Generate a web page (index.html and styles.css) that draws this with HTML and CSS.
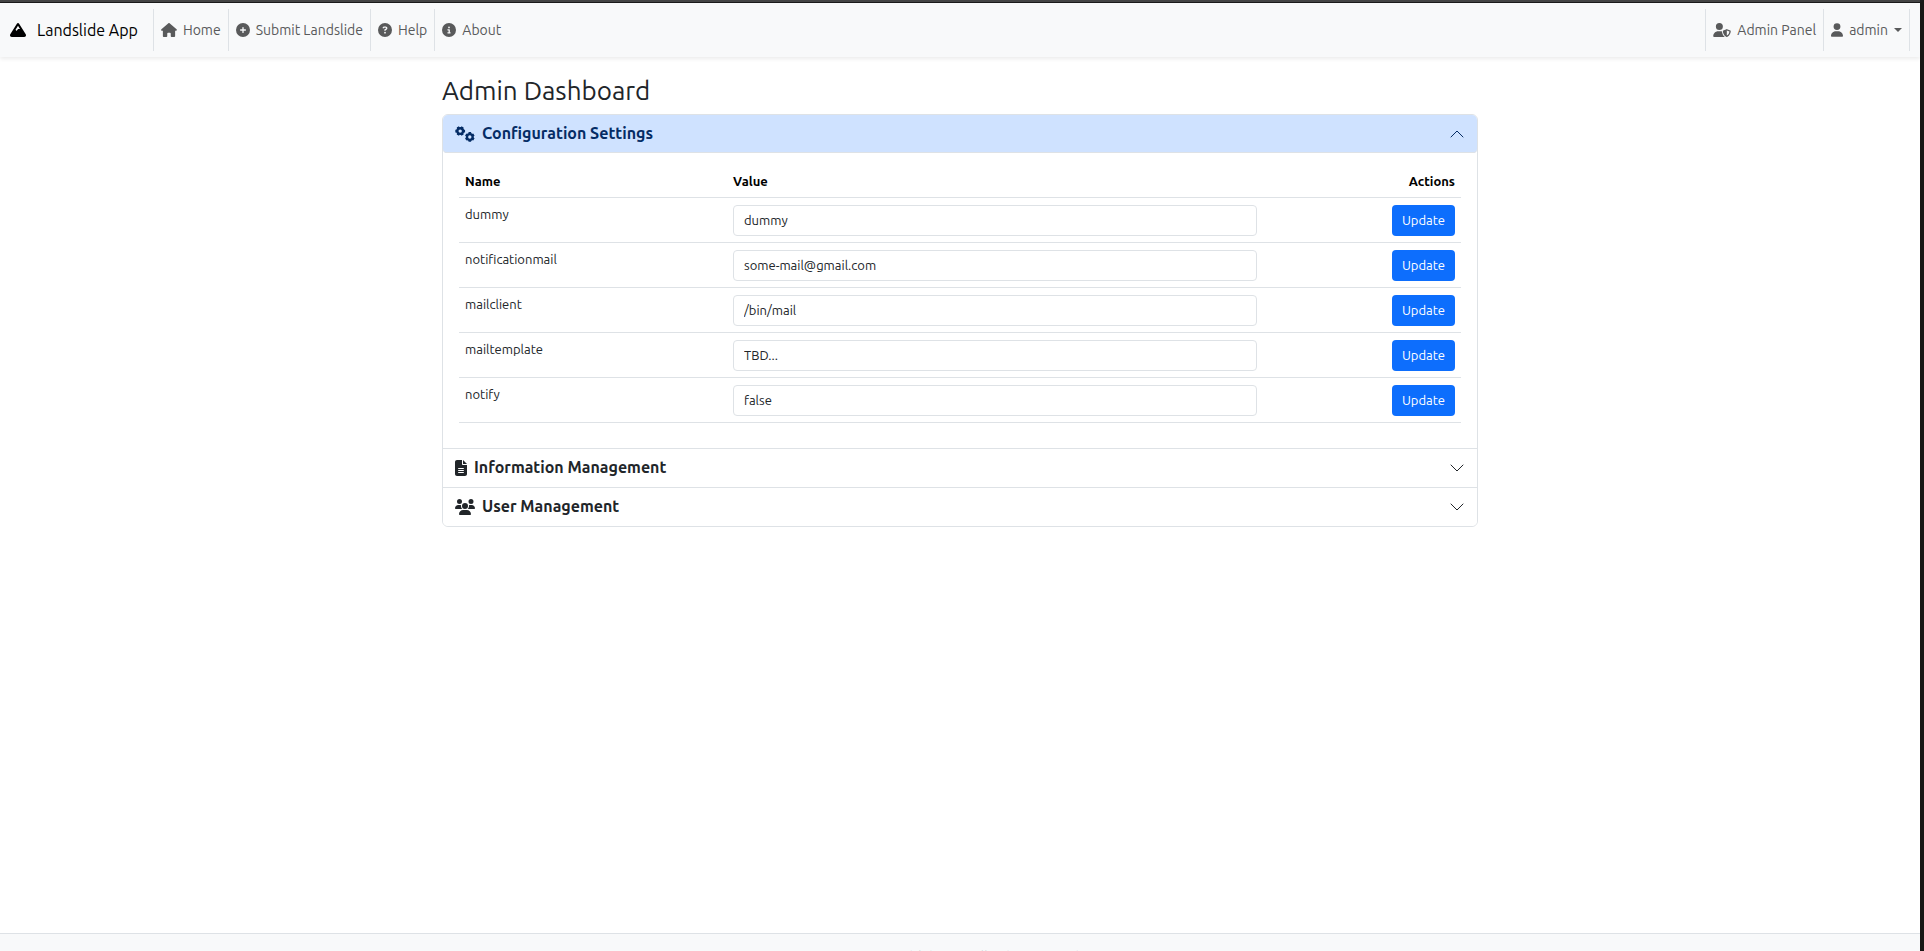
FILE: index.html
```html
<!DOCTYPE html>
<html lang="en">
<head>
<meta charset="utf-8">
<title>Landslide App</title>
<link rel="stylesheet" href="styles.css">
</head>
<body>
<header class="navbar">
  <a class="brand" href="#">
    <svg class="icon icon-brand" viewBox="0 0 512 512"><path d="M256 32c12.5 0 24.1 6.4 30.7 17L503.4 394.4c5.6 8.9 8.6 19.2 8.6 29.7c0 30.9-25 55.9-55.9 55.9H55.9C25 480 0 455 0 424.1c0-10.5 3-20.8 8.6-29.7L225.2 49c6.6-10.6 18.3-17 30.8-17zm65 192L256 120.4 176.9 246.5l18.3 24.4c6.4 8.5 19.2 8.5 25.6 0l25.6-34.1c6-8.1 15.5-12.8 25.6-12.8h49z"/></svg>
    <span>Landslide App</span>
  </a>
  <nav class="nav nav-main">
    <a class="nav-link" href="#"><svg class="icon icon-home" viewBox="0 0 576 512"><path d="M575.8 255.5c0 18-15 32.1-32 32.1h-32l.7 160.2c0 2.7-.2 5.4-.5 8.1V472c0 22.1-17.9 40-40 40H456c-1.1 0-2.2 0-3.3-.1c-1.4 .1-2.8 .1-4.2 .1H416 392c-22.1 0-40-17.9-40-40V448 384c0-17.7-14.3-32-32-32H256c-17.7 0-32 14.3-32 32v64 24c0 22.1-17.9 40-40 40H160 128.1c-1.5 0-3-.1-4.5-.2c-1.2 .1-2.4 .2-3.6 .2H104c-22.1 0-40-17.9-40-40V360c0-.9 0-1.9 .1-2.8V287.6H32c-18 0-32-14-32-32.1c0-9 3-17 10-24L266.4 8c7-7 15-8 22-8s15 2 21 7L564.8 231.5c8 7 12 15 11 24z"/></svg>Home</a>
    <a class="nav-link" href="#"><svg class="icon" viewBox="0 0 512 512"><path d="M256 512A256 256 0 1 0 256 0a256 256 0 1 0 0 512zM232 344V280H168c-13.3 0-24-10.7-24-24s10.7-24 24-24h64V168c0-13.3 10.7-24 24-24s24 10.7 24 24v64h64c13.3 0 24 10.7 24 24s-10.7 24-24 24H280v64c0 13.3-10.7 24-24 24s-24-10.7-24-24z"/></svg>Submit Landslide</a>
    <a class="nav-link" href="#"><svg class="icon" viewBox="0 0 512 512"><path d="M256 512A256 256 0 1 0 256 0a256 256 0 1 0 0 512zM169.8 165.3c7.9-22.3 29.1-37.3 52.8-37.3h58.3c34.9 0 63.1 28.3 63.1 63.1c0 22.6-12.1 43.5-31.7 54.8L280 264.4c-.2 13-10.9 23.6-24 23.6c-13.3 0-24-10.7-24-24V250.5c0-8.6 4.6-16.5 12.1-20.8l44.3-25.4c4.7-2.7 7.6-7.7 7.6-13.1c0-8.4-6.8-15.1-15.1-15.1H222.6c-3.4 0-6.4 2.1-7.5 5.3l-.4 1.2c-4.4 12.5-18.2 19-30.6 14.6s-19-18.2-14.6-30.6l.4-1.2zM224 352a32 32 0 1 1 64 0 32 32 0 1 1 -64 0z"/></svg>Help</a>
    <a class="nav-link" href="#"><svg class="icon" viewBox="0 0 512 512"><path d="M256 512A256 256 0 1 0 256 0a256 256 0 1 0 0 512zM216 336h24V272H216c-13.3 0-24-10.7-24-24s10.7-24 24-24h48c13.3 0 24 10.7 24 24v88h8c13.3 0 24 10.7 24 24s-10.7 24-24 24H216c-13.3 0-24-10.7-24-24s10.7-24 24-24zm40-208a32 32 0 1 1 0 64 32 32 0 1 1 0-64z"/></svg>About</a>
  </nav>
  <nav class="nav nav-user">
    <a class="nav-link" href="#"><svg class="icon icon-shield" viewBox="0 0 640 512"><path d="M224 256A128 128 0 1 0 224 0a128 128 0 1 0 0 256zm-45.7 48C79.8 304 0 383.8 0 482.3C0 498.7 13.3 512 29.7 512H418.3c1.8 0 3.5-.2 5.3-.5c-76.3-55.1-99.8-141-103.1-200.2c-16.1-4.8-33.1-7.3-50.7-7.3H178.3zm308.8-78.3l-120 48C358 277.4 352 286.2 352 296c0 63.3 25.9 168.8 134.8 214.2c5.9 2.5 12.6 2.5 18.5 0C614.1 464.8 640 359.3 640 296c0-9.8-6-18.6-15.1-22.3l-120-48c-5.7-2.3-12.1-2.3-17.8 0zM591.4 312c-3.9 50.7-27.2 116.7-95.4 149.7V273.8L591.4 312z"/></svg>Admin Panel</a>
    <button class="nav-link" type="button"><svg class="icon icon-user" viewBox="0 0 448 512"><path d="M224 256A128 128 0 1 0 224 0a128 128 0 1 0 0 256zm-45.7 48C79.8 304 0 383.8 0 482.3C0 498.7 13.3 512 29.7 512H418.3c16.4 0 29.7-13.3 29.7-29.7C448 383.8 368.2 304 269.7 304H178.3z"/></svg>admin<span class="caret"></span></button>
  </nav>
</header>

<main class="page">
  <h1 class="page-title">Admin Dashboard</h1>
  <div class="accordion">
    <section class="item">
      <h2 class="item-heading">
        <button class="item-toggle item-toggle-open" type="button" aria-expanded="true">
          <svg class="icon icon-wide" viewBox="0 0 640 512"><g fill="none" stroke="currentColor" stroke-width="74"><circle cx="166" cy="162" r="91"/><path stroke-width="84" d="M66 162H10M266 162h56M116 75 90 30M216 75l26-45M116 249l-26 45M216 249l26 45"/><circle cx="474" cy="350" r="91"/><path stroke-width="84" d="M474 250v-56M474 450v56M387 300l-45-26M561 300l45-26M387 400l-45 26M561 400l45 26"/></g></svg>
          <span class="item-label">Configuration Settings</span>
          <svg class="chevron" viewBox="0 0 16 16"><path d="m2 11 6-6 6 6"/></svg>
        </button>
      </h2>
      <div class="item-body">
        <table class="settings">
          <thead>
            <tr><th class="col-name">Name</th><th>Value</th><th class="col-actions">Actions</th></tr>
          </thead>
          <tbody>
            <tr><td><label for="dummy">dummy</label></td><td><input class="field" id="dummy" type="text" value="dummy"></td><td class="col-actions"><button class="btn" type="button">Update</button></td></tr>
            <tr><td><label for="notificationmail">notificationmail</label></td><td><input class="field" id="notificationmail" type="text" value="some-mail@gmail.com"></td><td class="col-actions"><button class="btn" type="button">Update</button></td></tr>
            <tr><td><label for="mailclient">mailclient</label></td><td><input class="field" id="mailclient" type="text" value="/bin/mail"></td><td class="col-actions"><button class="btn" type="button">Update</button></td></tr>
            <tr><td><label for="mailtemplate">mailtemplate</label></td><td><input class="field" id="mailtemplate" type="text" value="TBD..."></td><td class="col-actions"><button class="btn" type="button">Update</button></td></tr>
            <tr><td><label for="notify">notify</label></td><td><input class="field" id="notify" type="text" value="false"></td><td class="col-actions"><button class="btn" type="button">Update</button></td></tr>
          </tbody>
        </table>
      </div>
    </section>
    <section class="item">
      <h2 class="item-heading">
        <button class="item-toggle" type="button" aria-expanded="false">
          <svg class="icon icon-file" viewBox="0 0 384 512"><path fill-rule="evenodd" d="M64 0C28.700 0 0 28.700 0 64V448c0 35.300 28.700 64 64 64H320c35.300 0 64-28.700 64-64V160H256c-17.700 0-32-14.300-32-32V0H64zM256 0V128H384L256 0zM112 256H272c8.800 0 16 7.200 16 16s-7.200 16-16 16H112c-8.800 0-16-7.200-16-16s7.200-16 16-16zM112 320H272c8.800 0 16 7.200 16 16s-7.200 16-16 16H112c-8.800 0-16-7.200-16-16s7.200-16 16-16zM112 384H272c8.800 0 16 7.200 16 16s-7.200 16-16 16H112c-8.800 0-16-7.200-16-16s7.200-16 16-16z"/></svg>
          <span class="item-label">Information Management</span>
          <svg class="chevron" viewBox="0 0 16 16"><path d="m2 5 6 6 6-6"/></svg>
        </button>
      </h2>
    </section>
    <section class="item">
      <h2 class="item-heading">
        <button class="item-toggle" type="button" aria-expanded="false">
          <svg class="icon icon-wide" viewBox="0 0 640 512"><path d="M144 0a80 80 0 1 1 0 160A80 80 0 1 1 144 0zM512 0a80 80 0 1 1 0 160A80 80 0 1 1 512 0zM0 298.7C0 239.800 47.800 192 106.700 192h42.700c15.900 0 31 3.500 44.600 9.700c-1.300 7.200-1.900 14.700-1.900 22.300c0 38.200 16.800 72.500 43.300 96c-.2 0-.4 0-.7 0H21.300C9.600 320 0 310.400 0 298.700zM405.300 320c-.2 0-.4 0-.7 0c26.600-23.500 43.300-57.800 43.300-96c0-7.600-.7-15-1.900-22.300c13.600-6.300 28.700-9.700 44.600-9.700h42.700C592.200 192 640 239.800 640 298.700c0 11.800-9.600 21.300-21.300 21.300H405.300zM224 224a96 96 0 1 1 192 0 96 96 0 1 1 -192 0zM128 485.300C128 411.700 187.700 352 261.300 352H378.700C452.300 352 512 411.700 512 485.300c0 14.700-11.900 26.700-26.700 26.700H154.700c-14.700 0-26.700-11.900-26.700-26.700z"/></svg>
          <span class="item-label">User Management</span>
          <svg class="chevron" viewBox="0 0 16 16"><path d="m2 5 6 6 6-6"/></svg>
        </button>
      </h2>
    </section>
  </div>
</main>

<footer class="footer">© 2024 Landslide App. All rights reserved.</footer>
</body>
</html>
```
FILE: styles.css
```css
* { box-sizing: border-box; }

html { height: 100%; background: #fff; }

body {
  height: 100%;
  margin: 0;
  overflow: hidden;
  border-top: 3px solid #1a1a1a;
  border-right: 4px solid #181715;
  background: #fff;
  color: #212529;
  font: 14px/21px Ubuntu, "Noto Sans", sans-serif;
}

body::before {
  content: "";
  position: absolute;
  top: 0;
  left: 0;
  right: 4px;
  height: 2px;
  background: #444;
}

button, input { font: inherit; }

.icon {
  flex: none;
  width: 14px;
  height: 14px;
  fill: currentColor;
}
.icon-brand { width: 16px; height: 16px; }
.icon-home { width: 16px; }
.icon-shield { width: 18px; }
.icon-user { width: 12px; }
.icon-wide { width: 20px; height: 16px; }
.icon-file { width: 12px; height: 16px; }

.navbar {
  display: flex;
  align-items: center;
  height: 54px;
  padding: 0 10px;
  background: #f8f9fa;
  box-shadow: 0 2px 4px rgba(0, 0, 0, 0.08);
}

.brand {
  display: flex;
  align-items: center;
  gap: 11px;
  margin-right: 15px;
  color: #000;
  font-size: 16px;
  text-decoration: none;
}

.nav { display: flex; }
.nav-user { margin-left: auto; border-right: 1px solid #dee2e6; }

.nav-link {
  display: flex;
  align-items: center;
  gap: 6px;
  height: 42px;
  padding: 0 7px;
  border: 0;
  border-left: 1px solid #dee2e6;
  background: none;
  color: #595a5b;
  text-decoration: none;
}

.caret {
  border: 4px solid transparent;
  border-top-color: currentColor;
  border-bottom: 0;
}

.page {
  width: calc(100% - 48px);
  max-width: 1036px;
  min-height: calc(100% - 72px);
  margin: 0 auto;
  padding-top: 17px;
}

.page-title {
  margin: 0 0 6px;
  font-size: 26px;
  font-weight: 400;
  line-height: 34px;
}

.accordion {
  overflow: hidden;
  border: 1px solid #dee2e6;
  border-radius: 6px;
}

.item + .item { border-top: 1px solid #dee2e6; }
.item-heading { margin: 0; font-size: 16px; font-weight: 600; line-height: 20px; }

.item-toggle {
  display: flex;
  align-items: center;
  gap: 7px;
  width: 100%;
  padding: 8px 12px;
  border: 0;
  background: #fff;
  color: #212529;
  text-align: left;
}
.item-toggle-open {
  background: #cfe2ff;
  color: #052c65;
  box-shadow: inset 0 -1px #dee2e6;
  border-radius: 0 0 4px 4px;
}
.item-label { padding-bottom: 2px; }

.chevron {
  width: 16px;
  height: 16px;
  margin-left: auto;
  fill: none;
  stroke: currentColor;
  stroke-linecap: round;
  stroke-linejoin: round;
}

.item-body { padding: 12px 16px 25px; }

.settings {
  width: 100%;
  table-layout: fixed;
  border-collapse: collapse;
  font-size: 13px;
  line-height: 19px;
}
.settings th, .settings td {
  padding: 7px 6px 6px;
  border-bottom: 1px solid #dee2e6;
  text-align: left;
  vertical-align: top;
}
.settings th { color: #000; font-weight: 700; }
.settings .col-name { width: 268px; }
.settings .col-actions { width: 198px; text-align: right; }

.field {
  display: block;
  width: 100%;
  height: 31px;
  padding: 0 10px 2px;
  border: 1px solid #dee2e6;
  border-radius: 4px;
  background: #fff;
  color: #212529;
}

.btn {
  height: 31px;
  padding: 0 10px;
  border: 0;
  border-radius: 4px;
  background: #0d6efd;
  color: #fff;
  vertical-align: top;
}

.footer {
  padding: 13px;
  border-top: 1px solid #dee2e6;
  background: #f8f9fa;
  color: #6c757d;
  font-size: 13px;
  line-height: 19px;
  text-align: center;
}
```
